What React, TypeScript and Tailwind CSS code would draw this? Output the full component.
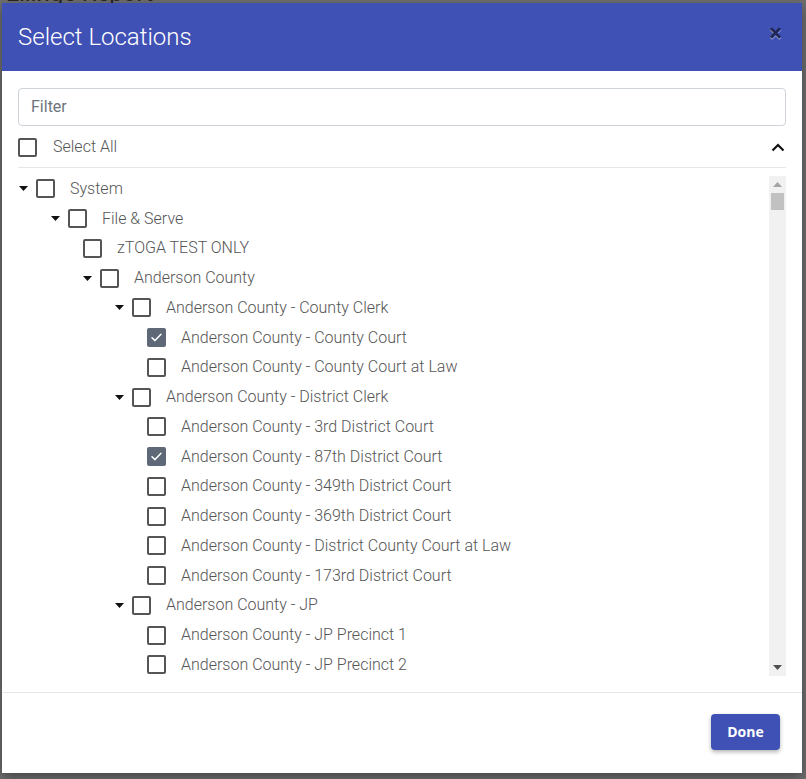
import React from "react";

type Node = { level: number; label: string; caret?: boolean; checked?: boolean };

const nodes: Node[] = [
  { level: 0, label: "System", caret: true },
  { level: 1, label: "File & Serve", caret: true },
  { level: 2, label: "zTOGA TEST ONLY" },
  { level: 2, label: "Anderson County", caret: true },
  { level: 3, label: "Anderson County - County Clerk", caret: true },
  { level: 4, label: "Anderson County - County Court", checked: true },
  { level: 4, label: "Anderson County - County Court at Law" },
  { level: 3, label: "Anderson County - District Clerk", caret: true },
  { level: 4, label: "Anderson County - 3rd District Court" },
  { level: 4, label: "Anderson County - 87th District Court", checked: true },
  { level: 4, label: "Anderson County - 349th District Court" },
  { level: 4, label: "Anderson County - 369th District Court" },
  { level: 4, label: "Anderson County - District County Court at Law" },
  { level: 4, label: "Anderson County - 173rd District Court" },
  { level: 3, label: "Anderson County - JP", caret: true },
  { level: 4, label: "Anderson County - JP Precinct 1" },
  { level: 4, label: "Anderson County - JP Precinct 2" },
  { level: 4, label: "Anderson County - JP Precinct 3" },
  { level: 4, label: "Anderson County - JP Precinct 4" },
];

function Checkbox({ checked }: { checked?: boolean }) {
  return checked ? (
    <span className="flex h-[19px] w-[19px] shrink-0 items-center justify-center rounded-[2px] bg-[#5f6876]">
      <svg width="13" height="13" viewBox="0 0 13 13" fill="none">
        <path d="M2 6.8 L5 9.6 L11 3.2" stroke="#fff" strokeWidth="1.5" strokeLinecap="round" strokeLinejoin="round" />
      </svg>
    </span>
  ) : (
    <span className="block h-[19px] w-[19px] shrink-0 rounded-[2px] border-2 border-[#555]" />
  );
}

function Caret() {
  return (
    <svg width="9" height="5" viewBox="0 0 9 5" className="shrink-0">
      <path d="M0 0 L9 0 L4.5 5 Z" fill="#111" />
    </svg>
  );
}

export default function App() {
  return (
    <div className="relative h-[779px] w-[806px] overflow-hidden bg-[#6f6f6f] font-['Roboto',sans-serif]">
      <div className="h-[3px] overflow-hidden pl-[6px]">
        <div className="-mt-[19px] text-[24px] leading-[24px] text-[#222]">Lilinge Report</div>
      </div>
      <div className="ml-[2px] flex h-[770px] w-[800px] flex-col bg-white shadow-[0_4px_12px_rgba(0,0,0,0.4)]">
        <div className="flex h-[68px] items-center justify-between bg-[#3f51b5] pl-[16px] pr-[20px]">
          <div className="text-[24px] font-light text-white">Select Locations</div>
          <div className="-mt-[8px] text-[24px] font-bold leading-none text-black opacity-50 [text-shadow:0_1px_0_#fff]">×</div>
        </div>
        <div className="px-[16px] pt-[17px]">
          <div className="flex h-[38px] items-center rounded-[4px] border border-[#ced4da] px-[12px] text-[16px] text-[#6c757d]">
            Filter
          </div>
          <div className="mt-[9px] flex h-[24px] items-center">
            <Checkbox />
            <span className="ml-[16px] text-[16px] font-light text-[#555]">Select All</span>
            <svg width="14" height="9" viewBox="0 0 14 9" className="ml-auto mr-[1px]" fill="none">
              <path d="M1.5 7.5 L7 2 L12.5 7.5" stroke="#111" strokeWidth="2.2" />
            </svg>
          </div>
          <div className="mt-[8px] h-px bg-[#e6e6e6]" />
          <div className="mt-[6px] flex h-[502px]">
            <div className="flex-1 overflow-hidden">
              {nodes.map((n, i) => (
                <div
                  key={i}
                  className="flex h-[29.75px] items-center"
                  style={{ paddingLeft: n.level * 32 + (n.caret ? 0 : 1) }}
                >
                  {n.caret && (
                    <span className="ml-[1px] mr-[8px] flex w-[9px]">
                      <Caret />
                    </span>
                  )}
                  <Checkbox checked={n.checked} />
                  <span className="ml-[15px] whitespace-nowrap text-[16px] font-light text-[#555]">{n.label}</span>
                </div>
              ))}
            </div>
            <div className="mt-[2px] flex h-[500px] w-[17px] flex-col items-center bg-[#f1f1f1]">
              <svg width="9" height="5" viewBox="0 0 9 5" className="mt-[6px]">
                <path d="M4.5 0 L9 5 L0 5 Z" fill="#a3a3a3" />
              </svg>
              <div className="mt-[6px] h-[17px] w-[13px] bg-[#c1c1c1]" />
              <svg width="9" height="5" viewBox="0 0 9 5" className="mb-[6px] mt-auto">
                <path d="M0 0 L9 0 L4.5 5 Z" fill="#505050" />
              </svg>
            </div>
          </div>
        </div>
        <div className="mt-[16px] h-px bg-[#e6e6e6]" />
        <div className="flex flex-1 items-center justify-end pb-[2px] pr-[22px]">
          <button className="h-[36px] w-[69px] rounded-[4px] bg-[#3f51b5] pb-[2px] font-['Open_Sans',sans-serif] text-[14px] font-bold text-white shadow-[0_2px_4px_rgba(0,0,0,0.3)]">
            Done
          </button>
        </div>
      </div>
    </div>
  );
}
